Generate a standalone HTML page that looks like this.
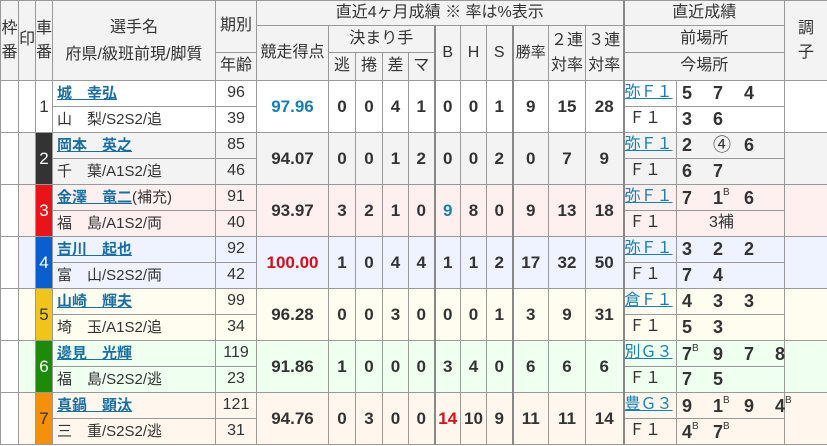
<!DOCTYPE html>
<html><head><meta charset="utf-8"><style>
body{margin:0;background:#fff;font-family:"Liberation Sans","Noto Sans CJK JP",sans-serif;color:#333;}
table{border-collapse:collapse;table-layout:fixed;width:827px;position:absolute;left:0;top:0;}
td{border:1px solid #999;padding:0;text-align:center;vertical-align:middle;overflow:hidden;white-space:nowrap;font-size:16px;line-height:1.15;}
thead td{background:#f3f3f3;color:#333;}
.tk{border-left:2px solid #888;}
.n{font-weight:bold;font-size:17px;}
.nm{text-align:left;padding-left:4px;font-size:15px;}
.nm a{color:#1a6fa0;font-weight:bold;text-decoration:underline;}
.pl{text-align:left;font-size:16px;}
.pl a{color:#1a7fb0;text-decoration:underline;}
.rs{text-align:left;padding-left:5px;font-weight:bold;font-size:18px;overflow:visible;}
.rs span{display:inline-block;width:31px;}
sup{font-size:10px;font-weight:normal;vertical-align:9px;}
.w{background:#fff;}
</style></head><body>
<table>
<colgroup><col style="width:18px"><col style="width:17px"><col style="width:17px"><col style="width:163px"><col style="width:41px"><col style="width:72px"><col style="width:27px"><col style="width:27px"><col style="width:26px"><col style="width:26px"><col style="width:26px"><col style="width:26px"><col style="width:26px"><col style="width:36px"><col style="width:37px"><col style="width:38px"><col style="width:53px"><col style="width:108px"><col style="width:43px"></colgroup>
<thead>
<tr style="height:25px"><td rowspan="3" style="line-height:24px">枠<br>番</td><td rowspan="3">印</td><td rowspan="3" style="line-height:24px">車<br>番</td><td rowspan="3" style="line-height:27px">選手名<br>府県/級班前現/脚質</td><td rowspan="2" style="height:39px">期別</td><td colspan="11">直近4ヶ月成績 ※ 率は%表示</td><td colspan="2" class="tk">直近成績</td><td rowspan="3" style="line-height:24px">調<br>子</td></tr>
<tr style="height:27px"><td rowspan="2">競走得点</td><td colspan="4">決まり手</td><td rowspan="2" class="tk">B</td><td rowspan="2">H</td><td rowspan="2">S</td><td rowspan="2" class="tk" style="font-size:15px">勝率</td><td rowspan="2" style="line-height:25px">２連<br>対率</td><td rowspan="2" style="line-height:25px">３連<br>対率</td><td colspan="2" class="tk">前場所</td></tr>
<tr style="height:28px"><td>年齢</td><td>逃</td><td>捲</td><td>差</td><td>マ</td><td colspan="2" class="tk">今場所</td></tr>
</thead>
<tbody>
<tr style="height:26px;background:#fff"><td rowspan="2" class="w"></td><td rowspan="2"></td><td rowspan="2" style="background:#fff;color:#333;font-size:17px">1</td><td class="nm"><a>城　幸弘</a></td><td>96</td><td rowspan="2" class="n" style="color:#1a7fb0">97.96</td><td rowspan="2" class="n">0</td><td rowspan="2" class="n">0</td><td rowspan="2" class="n">4</td><td rowspan="2" class="n">1</td><td rowspan="2" class="n tk">0</td><td rowspan="2" class="n">0</td><td rowspan="2" class="n">1</td><td rowspan="2" class="n tk">9</td><td rowspan="2" class="n">15</td><td rowspan="2" class="n">28</td><td class="pl tk"><a>弥Ｆ１</a></td><td class="rs"><span>5</span><span>7</span><span>4</span></td><td rowspan="2"></td></tr>
<tr style="height:26px;background:#fff"><td class="nm">山　梨/S2S2/追</td><td>39</td><td class="pl tk">&nbsp;Ｆ１</td><td class="rs"><span>3</span><span>6</span></td></tr>

<tr style="height:26px;background:#f3f3f3"><td rowspan="2" class="w"></td><td rowspan="2"></td><td rowspan="2" style="background:#333;color:#fff;font-size:17px">2</td><td class="nm"><a>岡本　英之</a></td><td>85</td><td rowspan="2" class="n">94.07</td><td rowspan="2" class="n">0</td><td rowspan="2" class="n">0</td><td rowspan="2" class="n">1</td><td rowspan="2" class="n">2</td><td rowspan="2" class="n tk">0</td><td rowspan="2" class="n">0</td><td rowspan="2" class="n">2</td><td rowspan="2" class="n tk">0</td><td rowspan="2" class="n">7</td><td rowspan="2" class="n">9</td><td class="pl tk"><a>弥Ｆ１</a></td><td class="rs"><span>2</span><span style="font-weight:normal">④</span><span>6</span></td><td rowspan="2"></td></tr>
<tr style="height:26px;background:#f3f3f3"><td class="nm">千　葉/A1S2/追</td><td>46</td><td class="pl tk">&nbsp;Ｆ１</td><td class="rs"><span>6</span><span>7</span></td></tr>

<tr style="height:26px;background:#fff0f0"><td rowspan="2" class="w"></td><td rowspan="2"></td><td rowspan="2" style="background:#e8141a;color:#fff;font-size:17px">3</td><td class="nm"><a>金澤　竜二</a>(補充)</td><td>91</td><td rowspan="2" class="n">93.97</td><td rowspan="2" class="n">3</td><td rowspan="2" class="n">2</td><td rowspan="2" class="n">1</td><td rowspan="2" class="n">0</td><td rowspan="2" class="n tk" style="color:#1a7fb0">9</td><td rowspan="2" class="n">8</td><td rowspan="2" class="n">0</td><td rowspan="2" class="n tk">9</td><td rowspan="2" class="n">13</td><td rowspan="2" class="n">18</td><td class="pl tk"><a>弥Ｆ１</a></td><td class="rs"><span>7</span><span>1<sup>B</sup></span><span>6</span></td><td rowspan="2"></td></tr>
<tr style="height:26px;background:#fff0f0"><td class="nm">福　島/A1S2/両</td><td>40</td><td class="pl tk">&nbsp;Ｆ１</td><td class="rs" style="font-weight:normal;font-size:16px;padding-left:32px">3補</td></tr>

<tr style="height:26px;background:#eef3ff"><td rowspan="2" class="w"></td><td rowspan="2"></td><td rowspan="2" style="background:#0a5fcf;color:#fff;font-size:17px">4</td><td class="nm"><a>吉川　起也</a></td><td>92</td><td rowspan="2" class="n" style="color:#d0101a">100.00</td><td rowspan="2" class="n">1</td><td rowspan="2" class="n">0</td><td rowspan="2" class="n">4</td><td rowspan="2" class="n">4</td><td rowspan="2" class="n tk">1</td><td rowspan="2" class="n">1</td><td rowspan="2" class="n">2</td><td rowspan="2" class="n tk">17</td><td rowspan="2" class="n">32</td><td rowspan="2" class="n">50</td><td class="pl tk"><a>弥Ｆ１</a></td><td class="rs"><span>3</span><span>2</span><span>2</span></td><td rowspan="2"></td></tr>
<tr style="height:26px;background:#eef3ff"><td class="nm">富　山/S2S2/両</td><td>42</td><td class="pl tk">&nbsp;Ｆ１</td><td class="rs"><span>7</span><span>4</span></td></tr>

<tr style="height:26px;background:#fffdf0"><td rowspan="2" class="w"></td><td rowspan="2"></td><td rowspan="2" style="background:#f0c41a;color:#333;font-size:17px">5</td><td class="nm"><a>山崎　輝夫</a></td><td>99</td><td rowspan="2" class="n">96.28</td><td rowspan="2" class="n">0</td><td rowspan="2" class="n">0</td><td rowspan="2" class="n">3</td><td rowspan="2" class="n">0</td><td rowspan="2" class="n tk">0</td><td rowspan="2" class="n">0</td><td rowspan="2" class="n">1</td><td rowspan="2" class="n tk">3</td><td rowspan="2" class="n">9</td><td rowspan="2" class="n">31</td><td class="pl tk"><a>倉Ｆ１</a></td><td class="rs"><span>4</span><span>3</span><span>3</span></td><td rowspan="2"></td></tr>
<tr style="height:26px;background:#fffdf0"><td class="nm">埼　玉/A1S2/追</td><td>34</td><td class="pl tk">&nbsp;Ｆ１</td><td class="rs"><span>5</span><span>3</span></td></tr>

<tr style="height:26px;background:#effff0"><td rowspan="2" class="w"></td><td rowspan="2"></td><td rowspan="2" style="background:#1e8a0a;color:#fff;font-size:17px">6</td><td class="nm"><a>邊見　光輝</a></td><td>119</td><td rowspan="2" class="n">91.86</td><td rowspan="2" class="n">1</td><td rowspan="2" class="n">0</td><td rowspan="2" class="n">0</td><td rowspan="2" class="n">0</td><td rowspan="2" class="n tk">3</td><td rowspan="2" class="n">4</td><td rowspan="2" class="n">0</td><td rowspan="2" class="n tk">6</td><td rowspan="2" class="n">6</td><td rowspan="2" class="n">6</td><td class="pl tk"><a>別Ｇ３</a></td><td class="rs"><span>7<sup>B</sup></span><span>9</span><span>7</span><span>8</span></td><td rowspan="2"></td></tr>
<tr style="height:26px;background:#effff0"><td class="nm">福　島/S2S2/逃</td><td>23</td><td class="pl tk">&nbsp;Ｆ１</td><td class="rs"><span>7</span><span>5</span></td></tr>

<tr style="height:26px;background:#fff6ee"><td rowspan="2" class="w"></td><td rowspan="2"></td><td rowspan="2" style="background:#f5900a;color:#333;font-size:17px">7</td><td class="nm"><a>真鍋　顕汰</a></td><td>121</td><td rowspan="2" class="n">94.76</td><td rowspan="2" class="n">0</td><td rowspan="2" class="n">3</td><td rowspan="2" class="n">0</td><td rowspan="2" class="n">0</td><td rowspan="2" class="n tk" style="color:#d0101a">14</td><td rowspan="2" class="n">10</td><td rowspan="2" class="n">9</td><td rowspan="2" class="n tk">11</td><td rowspan="2" class="n">11</td><td rowspan="2" class="n">14</td><td class="pl tk"><a>豊Ｇ３</a></td><td class="rs"><span>9</span><span>1<sup>B</sup></span><span>9</span><span>4<sup>B</sup></span></td><td rowspan="2"></td></tr>
<tr style="height:26px;background:#fff6ee"><td class="nm">三　重/S2S2/逃</td><td>31</td><td class="pl tk">&nbsp;Ｆ１</td><td class="rs"><span>4<sup>B</sup></span><span>7<sup>B</sup></span></td></tr>
</tbody></table>
</body></html>
